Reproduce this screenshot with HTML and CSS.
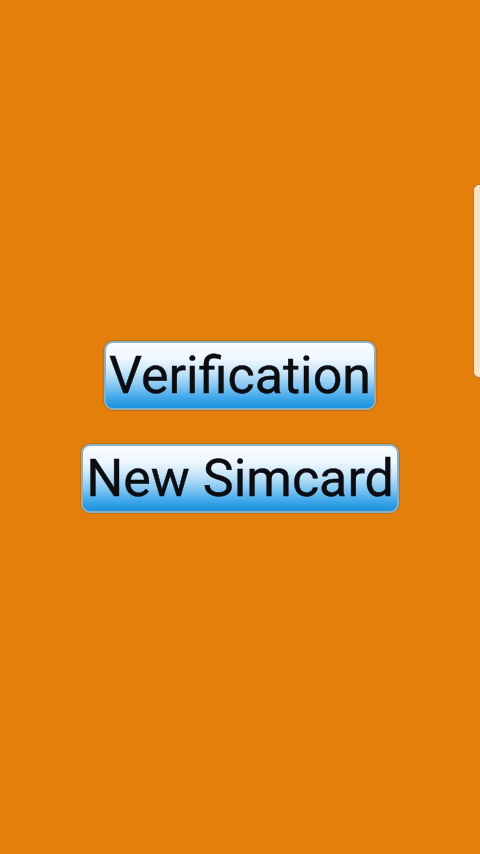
FILE: index.html
```html
<!DOCTYPE html>
<html>
<head>
<meta charset="utf-8">
<link rel="stylesheet" href="styles.css">
</head>
<body>
<main class="screen">
  <div class="actions">
    <button class="btn">Verification</button>
    <button class="btn">New Simcard</button>
  </div>
  <div class="edge-handle"></div>
</main>
</body>
</html>
```
FILE: styles.css
```css
html, body {
  margin: 0;
  padding: 0;
  height: 100%;
}
body {
  background: #e47f0b;
  font-family: Roboto, "Noto Sans", sans-serif;
}
.screen {
  position: relative;
  width: 480px;
  height: 854px;
  display: flex;
  align-items: center;
  justify-content: center;
}
.actions {
  display: flex;
  flex-direction: column;
  align-items: center;
  gap: 34px;
}
.btn {
  height: 69px;
  padding: 0 3px;
  box-sizing: border-box;
  border: 2px solid #8fafbf;
  border-radius: 9px;
  background: linear-gradient(to bottom, #f8fcff 0%, #eef7fd 25%, #c6e4f8 45%, #86c7f1 65%, #3ea6ea 85%, #1b8fdc 100%);
  font-family: Roboto, "Noto Sans", sans-serif;
  font-size: 52px;
  line-height: 1;
  color: #0b0d12;
  -webkit-text-stroke: 0.4px #0b0d12;
  display: flex;
  align-items: center;
  justify-content: center;
  box-shadow: 0 0 1px 1px rgba(120, 90, 40, 0.35);
}
.edge-handle {
  position: absolute;
  right: 0;
  top: 184px;
  width: 6px;
  height: 192px;
  background: #fbe2c0;
  border: 1px solid #b8783a;
  border-right: none;
  border-radius: 6px 0 0 6px;
}
```
